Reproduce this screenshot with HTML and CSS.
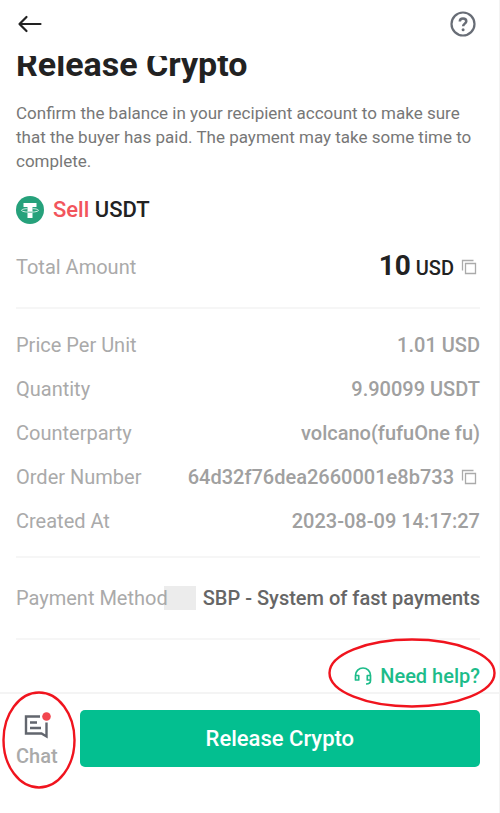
FILE: index.html
```html
<!DOCTYPE html>
<html lang="en">
<head>
<meta charset="utf-8">
<meta name="viewport" content="width=device-width, initial-scale=1">
<title>Release Crypto</title>
<link rel="stylesheet" href="styles.css">
</head>
<body>
<div class="app">
  <header class="topbar">
    <button class="icon-button" type="button" aria-label="Back">
      <svg width="28" height="20" viewBox="0 0 28 20" fill="none" stroke="#222" stroke-width="2.200" stroke-linecap="round" stroke-linejoin="round"><path d="M24.500 10H4M10.500 3L3.500 10l7 7"/></svg>
    </button>
    <button class="icon-button" type="button" aria-label="Help">
      <svg width="26" height="26" viewBox="0 0 26 26" fill="none" stroke="#686d76" stroke-width="2.200"><circle cx="13" cy="13" r="11.500"/><path d="M9.800 10.600c0-2 1.300-3.200 3.200-3.200s3.300 1.100 3.300 2.900c0 2.300-3.200 2.400-3.200 5" stroke-width="2.500"/><circle cx="13.100" cy="18.700" r="1.500" fill="#686d76" stroke="none"/></svg>
    </button>
  </header>

  <main>
    <div class="title-clip"><h1 class="title">Release Crypto</h1></div>
    <p class="intro">Confirm the balance in your recipient account to make sure that the buyer has paid. The payment may take some time to complete.</p>

    <h2 class="trade">
      <svg width="28" height="28" viewBox="0 0 28 28"><circle cx="14" cy="14" r="14" fill="#26a17b"/><path d="M7.500 7h13v4h-4V22h-5V11h-4z" fill="#fff"/><path d="M11.500 12.600c-3.500.2-6 .9-6 1.700 0 1 3.800 1.900 8.500 1.900s8.500-.9 8.500-1.900c0-.8-2.500-1.500-6-1.700" fill="none" stroke="#d5eee5"/><path d="M11.500 16.200h5" stroke="#26a17b" stroke-width=".7"/></svg>
      <span><span class="side">Sell</span> USDT</span>
    </h2>

    <dl class="group group-total">
      <div class="row">
        <dt>Total Amount</dt>
        <dd>
          <span class="total"><strong class="amount">10</strong> USD</span>
          <button class="copy" type="button" aria-label="Copy amount"><svg width="16" height="16" viewBox="0 0 16 16" fill="none" stroke="#aaa" stroke-width="1.300"><path d="M4.500 4.500h10v10h-10zM1.500 11.500v-10h11"/></svg></button>
        </dd>
      </div>
    </dl>

    <dl class="group group-details">
      <div class="row"><dt>Price Per Unit</dt><dd>1.01 USD</dd></div>
      <div class="row"><dt>Quantity</dt><dd>9.90099 USDT</dd></div>
      <div class="row"><dt>Counterparty</dt><dd>volcano(fufuOne fu)</dd></div>
      <div class="row"><dt>Order Number</dt>
        <dd>64d32f76dea2660001e8b733
          <button class="copy" type="button" aria-label="Copy order number"><svg width="16" height="16" viewBox="0 0 16 16" fill="none" stroke="#aaa" stroke-width="1.300"><path d="M4.500 4.500h10v10h-10zM1.500 11.500v-10h11"/></svg></button>
        </dd>
      </div>
      <div class="row"><dt>Created At</dt><dd>2023-08-09 14:17:27</dd></div>
    </dl>

    <dl class="group group-payment">
      <div class="row"><dt class="payment-label"><span class="payment-text">Payment Method</span><span class="redaction"></span></dt><dd class="payment">SBP - System of fast payments</dd></div>
    </dl>

    <div class="help-line">
      <a class="help" href="#help">
        <svg width="18" height="18" viewBox="0 0 18 18" fill="none" stroke="#1dbc8a" stroke-width="1.700" stroke-linejoin="round"><path d="M1.500 12.500V8.500a7.500 7.500 0 0 1 15 0v5c0 2-1.500 3.500-4.500 3.500M1.500 8.500h3.200v4.500H1.500zM16.500 8.500h-3.200v4.500h3.200"/></svg>
        Need help?
        <svg class="mark mark-help" viewBox="0 0 168 70" fill="none" stroke="#f0141e" stroke-width="2.400" aria-hidden="true"><ellipse cx="84" cy="35" rx="82.500" ry="33.500"/></svg>
      </a>
    </div>
  </main>

  <footer class="actions">
    <button class="chat" type="button">
      <svg width="28" height="28" viewBox="0 0 28 28" fill="none" stroke="#62666e" stroke-width="2.400"><path d="M17 4.500H3V21.500h15.500l5 3V10.500M7 10.500h7M7 16h11"/><circle cx="23.500" cy="4.500" r="4.300" fill="#f2464f" stroke="none"/></svg>
      Chat
      <svg class="mark mark-chat" viewBox="0 0 74 98" fill="none" stroke="#f0141e" stroke-width="2.400" aria-hidden="true"><ellipse cx="37" cy="49" rx="35.500" ry="47.500"/></svg>
    </button>
    <button class="release" type="button">Release Crypto</button>
  </footer>
</div>
</body>
</html>
```
FILE: styles.css
```css
* {
  box-sizing: border-box;
}

body {
  margin: 0;
  background: #fff;
  color: #222;
  font-family: Roboto, "Liberation Sans", sans-serif;
}

button {
  padding: 0;
  border: 0;
  background: none;
  font: inherit;
  cursor: pointer;
}

svg {
  display: block;
  flex: none;
}

.app {
  min-height: 100vh;
  border-right: 1px solid #f3f3f3;
}

.topbar {
  display: flex;
  align-items: center;
  justify-content: space-between;
  height: 56px;
  padding: 0 23px 8px 16px;
}

/* The title is partly scrolled under the top bar. */
.title-clip {
  overflow: hidden;
  padding: 0 19px 0 16px;
}

.title {
  margin: -12px 0 0;
  font-size: 34px;
  font-weight: 700;
  line-height: 40px;
}

.intro {
  margin: 17px 19px 0 16px;
  color: #777;
  font-size: 17px;
  line-height: 24px;
}

.trade {
  display: flex;
  align-items: center;
  gap: 9px;
  margin: 21px 19px 0 16px;
  font-size: 22px;
  font-weight: 500;
  line-height: 32px;
}

.side {
  color: #f2555c;
}

.group {
  margin: 0 19px 0 16px;
  border-bottom: 2px solid #f6f6f6;
}

.group-total {
  padding: 19px 0 18px;
}

.group-details {
  padding: 14px 0 13px;
}

.group-payment {
  padding: 18px 0;
}

.row {
  display: flex;
  align-items: center;
  justify-content: space-between;
  min-height: 44px;
  font-size: 20px;
  line-height: 24px;
}

dt {
  color: #aaa;
}

dd {
  display: flex;
  align-items: center;
  gap: 7px;
  margin: 0;
  color: #a0a0a0;
  font-weight: 500;
}

.total {
  color: #222;
}

.amount {
  font-size: 28px;
  font-weight: 700;
}

.copy {
  padding-right: 3px;
}

.payment-label {
  display: flex;
  align-items: center;
}

.payment-text {
  position: relative;
}

.redaction {
  width: 32px;
  height: 24px;
  margin-left: -4px;
  background: #ececec;
}

.payment {
  color: #666;
}

.help-line {
  display: flex;
  justify-content: flex-end;
  padding: 24px 19px 4px;
}

.help {
  position: relative;
  display: flex;
  align-items: center;
  gap: 8px;
  color: #1dbc8a;
  font-size: 20px;
  font-weight: 500;
  line-height: 24px;
  text-decoration: none;
}

/* Hand-drawn highlight rings laid over the controls. */
.mark {
  position: absolute;
  z-index: 1;
  pointer-events: none;
}

.mark-help {
  top: -26px;
  right: -16px;
  width: 168px;
  height: 70px;
}

.mark-chat {
  top: -19px;
  left: -14px;
  width: 74px;
  height: 98px;
}

.actions {
  display: flex;
  gap: 22px;
  padding: 16px 19px 16px 16px;
  border-top: 2px solid #f4f4f4;
}

.chat {
  position: relative;
  display: flex;
  flex-direction: column;
  align-items: center;
  gap: 4px;
  padding-top: 2px;
  color: #aaa;
  font-size: 20px;
  font-weight: 500;
  line-height: 24px;
}

.release {
  flex: 1;
  height: 57px;
  border-radius: 5px;
  background: #03bf90;
  color: #fff;
  font-size: 22px;
  font-weight: 500;
}
```
